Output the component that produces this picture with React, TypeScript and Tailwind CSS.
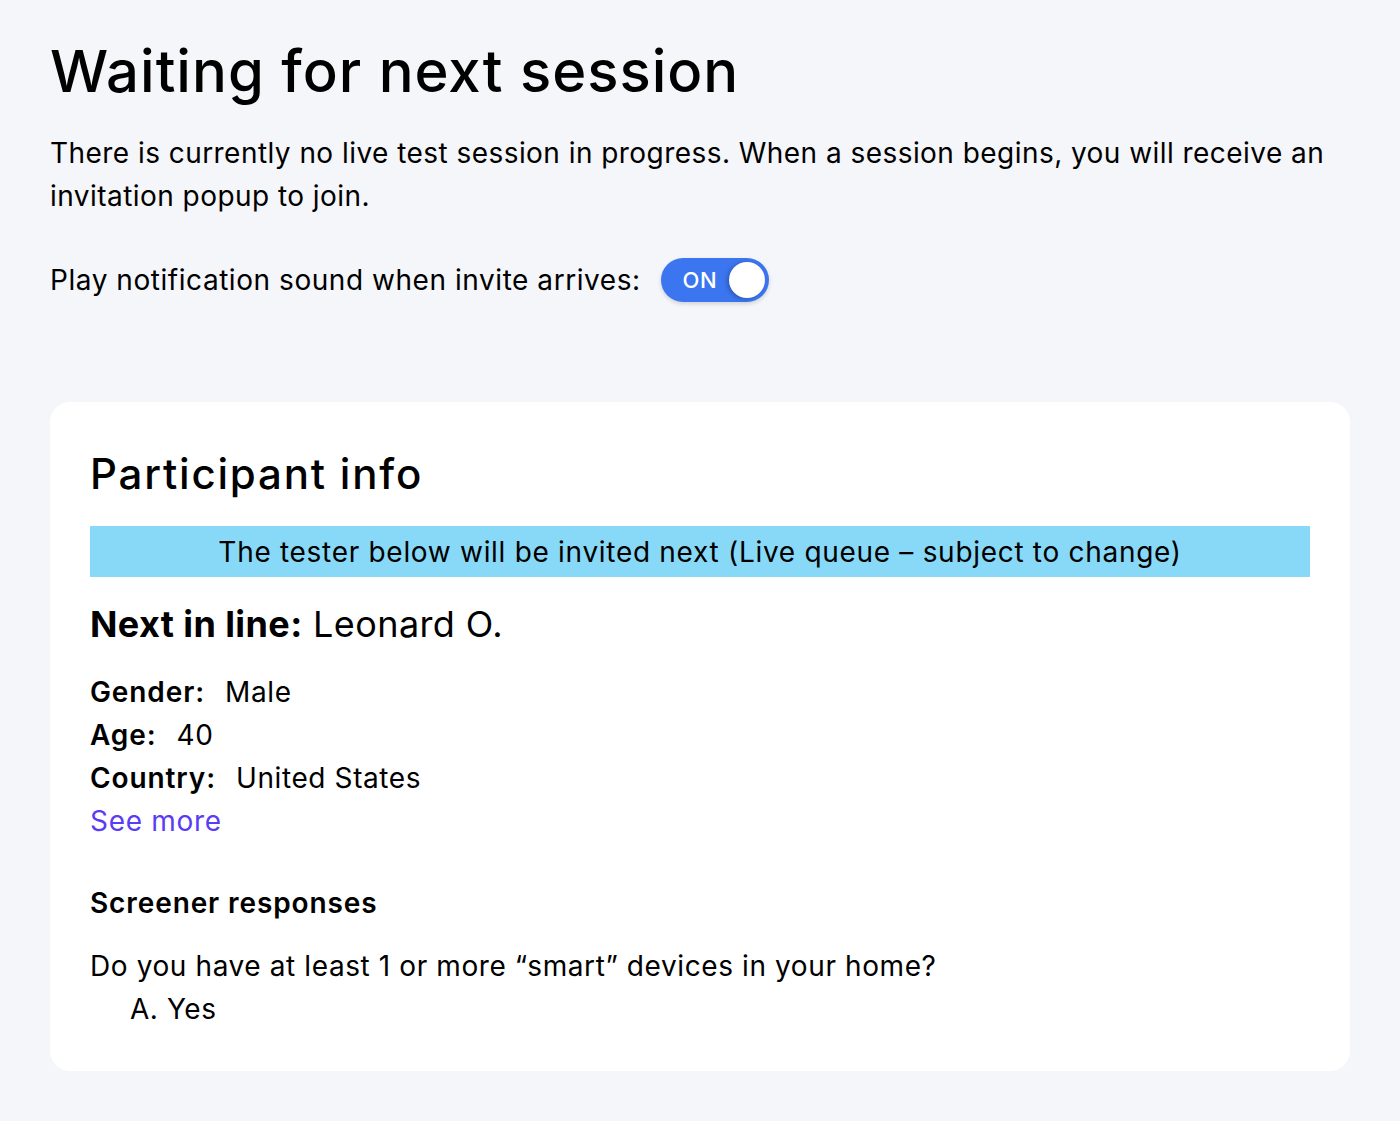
const App = () => {
  const details = [
    { label: 'Gender:', value: 'Male' },
    { label: 'Age:', value: '40' },
    { label: 'Country:', value: 'United States' },
  ];

  return (
    <div
      className="min-h-[1121px] bg-[#f5f6fa] px-[50px] pt-[36px] pb-[50px] text-black tracking-[0.55px]"
      style={{ fontFamily: 'Inter, "Noto Sans", sans-serif' }}
    >
      <h1 className="text-[58px] leading-[70px] font-medium tracking-[1px]">Waiting for next session</h1>
      <p className="mt-[26px] text-[28px] leading-[43px] tracking-[0.45px]">
        There is currently no live test session in progress. When a session begins, you will receive an
        invitation popup to join.
      </p>
      <div className="mt-[40px] flex items-center gap-5">
        <span className="text-[28px] leading-[43px]">Play notification sound when invite arrives:</span>
        <button className="flex h-[44px] w-[108px] items-center justify-between rounded-full bg-[#3b76f0] pl-[22px] pr-[4px] shadow-[0_2px_4px_rgba(0,0,0,0.15)]">
          <span className="text-[22px] font-medium text-white">ON</span>
          <span className="h-[36px] w-[36px] rounded-full bg-white shadow-[-2px_1px_4px_rgba(0,0,0,0.25)]" />
        </button>
      </div>

      <section className="mt-[100px] rounded-[20px] bg-white px-10 pt-[44px] pb-[40px]">
        <h2 className="text-[42px] leading-[56px] font-medium tracking-[1.8px]">Participant info</h2>
        <div className="mt-[24px] flex h-[51px] items-center justify-center bg-[#87d9f7] text-[28px] tracking-[0.7px]">
          The tester below will be invited next (Live queue – subject to change)
        </div>
        <div className="mt-[24px] text-[36px] leading-[46px] tracking-[0.4px]">
          <span className="font-bold">Next in line:</span> Leonard O.
        </div>
        <div className="mt-[24px] flex flex-col text-[28px] leading-[43px]">
          {details.map((d) => (
            <div key={d.label} className="flex gap-5">
              <span className="font-semibold tracking-[0.9px]">{d.label}</span>
              <span className="tracking-[0.6px]">{d.value}</span>
            </div>
          ))}
          <a href="#" className="self-start text-[#5b3cf5] tracking-[0.7px]">
            See more
          </a>
        </div>
        <h3 className="mt-[39px] text-[28px] leading-[43px] font-semibold tracking-[0.9px]">Screener responses</h3>
        <p className="mt-[20px] text-[28px] leading-[43px] tracking-[0.6px]">
          Do you have at least 1 or more “smart” devices in your home?
        </p>
        <p className="pl-10 text-[28px] leading-[43px]">A. Yes</p>
      </section>
    </div>
  );
};

export default App;
